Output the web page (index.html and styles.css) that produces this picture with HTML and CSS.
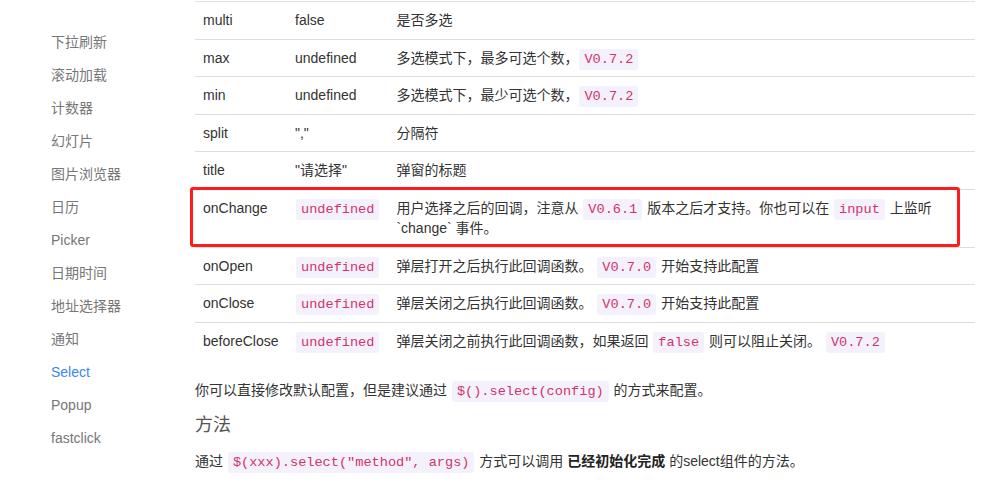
FILE: index.html
```html
<!DOCTYPE html>
<html lang="zh-CN">
<head>
  <meta charset="UTF-8" />
  <meta name="viewport" content="width=device-width, initial-scale=1.0" />
  <title>Select</title>
  <link rel="stylesheet" href="styles.css">
</head>
<body>
  <div class="page">
    <aside class="sidebar">
      <ul>
        <li><a href="#">下拉刷新</a></li>
        <li><a href="#">滚动加载</a></li>
        <li><a href="#">计数器</a></li>
        <li><a href="#">幻灯片</a></li>
        <li><a href="#">图片浏览器</a></li>
        <li><a href="#">日历</a></li>
        <li><a href="#">Picker</a></li>
        <li><a href="#">日期时间</a></li>
        <li><a href="#">地址选择器</a></li>
        <li><a href="#">通知</a></li>
        <li><a href="#" class="active">Select</a></li>
        <li><a href="#">Popup</a></li>
        <li><a href="#">fastclick</a></li>
      </ul>
    </aside>

    <main class="content">
      <div class="table-wrap">
        <table class="params">
          <tr>
            <td>multi</td>
            <td>false</td>
            <td>是否多选</td>
          </tr>
          <tr>
            <td>max</td>
            <td>undefined</td>
            <td>多选模式下，最多可选个数，<code>V0.7.2</code></td>
          </tr>
          <tr>
            <td>min</td>
            <td>undefined</td>
            <td>多选模式下，最少可选个数，<code>V0.7.2</code></td>
          </tr>
          <tr>
            <td>split</td>
            <td>","</td>
            <td>分隔符</td>
          </tr>
          <tr>
            <td>title</td>
            <td>"请选择"</td>
            <td>弹窗的标题</td>
          </tr>
          <tr>
            <td>onChange</td>
            <td><code>undefined</code></td>
            <td>用户选择之后的回调，注意从 <code>V0.6.1</code> 版本之后才支持。你也可以在 <code>input</code> 上监听 `change` 事件。</td>
          </tr>
          <tr>
            <td>onOpen</td>
            <td><code>undefined</code></td>
            <td>弹层打开之后执行此回调函数。 <code>V0.7.0</code> 开始支持此配置</td>
          </tr>
          <tr>
            <td>onClose</td>
            <td><code>undefined</code></td>
            <td>弹层关闭之后执行此回调函数。 <code>V0.7.0</code> 开始支持此配置</td>
          </tr>
          <tr>
            <td>beforeClose</td>
            <td><code>undefined</code></td>
            <td>弹层关闭之前执行此回调函数，如果返回 <code>false</code> 则可以阻止关闭。 <code>V0.7.2</code></td>
          </tr>
        </table>
        <!-- annotation box drawn over the onChange row -->
        <div class="highlight"></div>
      </div>

      <p class="first">你可以直接修改默认配置，但是建议通过 <code>$().select(config)</code> 的方式来配置。</p>
      <h3>方法</h3>
      <p>通过 <code>$(xxx).select("method", args)</code> 方式可以调用 <strong>已经初始化完成</strong> 的select组件的方法。</p>
    </main>
  </div>
</body>
</html>
```

FILE: styles.css
```css
body {
  margin: 0;
  padding: 0;
  background: #fff;
  color: #333;
  font-family: "Liberation Sans", "Noto Sans CJK SC", sans-serif;
  font-size: 14px;
}
.page {
  display: flex;
}
.sidebar {
  width: 195px;
  flex-shrink: 0;
}
.sidebar ul {
  list-style: none;
  margin: 0;
  padding: 26px 0 0 51px;
}
.sidebar li {
  line-height: 33px;
}
.sidebar a {
  color: #777;
  text-decoration: none;
}
.sidebar a.active {
  color: #3b86f0;
}
.content {
  flex: 1;
  padding: 1px 15px 0 0;
}
.table-wrap {
  position: relative;
}
.params {
  width: 100%;
  border-collapse: collapse;
}
.params td {
  border-top: 1px solid #dedede;
  padding: 8px 8px;
  line-height: 20.5px;
  vertical-align: top;
}
.params tr:first-child td {
  border-top-color: #e2e2e2;
}
.params td:nth-child(1) {
  width: 76px;
}
.params td:nth-child(2) {
  width: 84px;
}
code {
  font-family: "Liberation Mono", "DejaVu Sans Mono", monospace;
  font-size: 13.6px;
  line-height: 1;
  color: #d1346a;
  background: #f4f1fc;
  padding: 3px 5px;
  margin: 0 1px;
  border-radius: 3px;
}
.highlight {
  position: absolute;
  left: -5px;
  top: 186px;
  width: 764px;
  height: 54px;
  border: 3px solid #ff1c1c;
  border-radius: 3px;
}
.content p {
  margin: 0;
  line-height: 24px;
}
.content p.first {
  margin-top: 19px;
}
.content h3 {
  margin: 11px 0 12px;
  font-size: 18px;
  font-weight: normal;
  line-height: 24px;
  color: #555;
}
strong {
  font-weight: bold;
  color: #222;
}
```
